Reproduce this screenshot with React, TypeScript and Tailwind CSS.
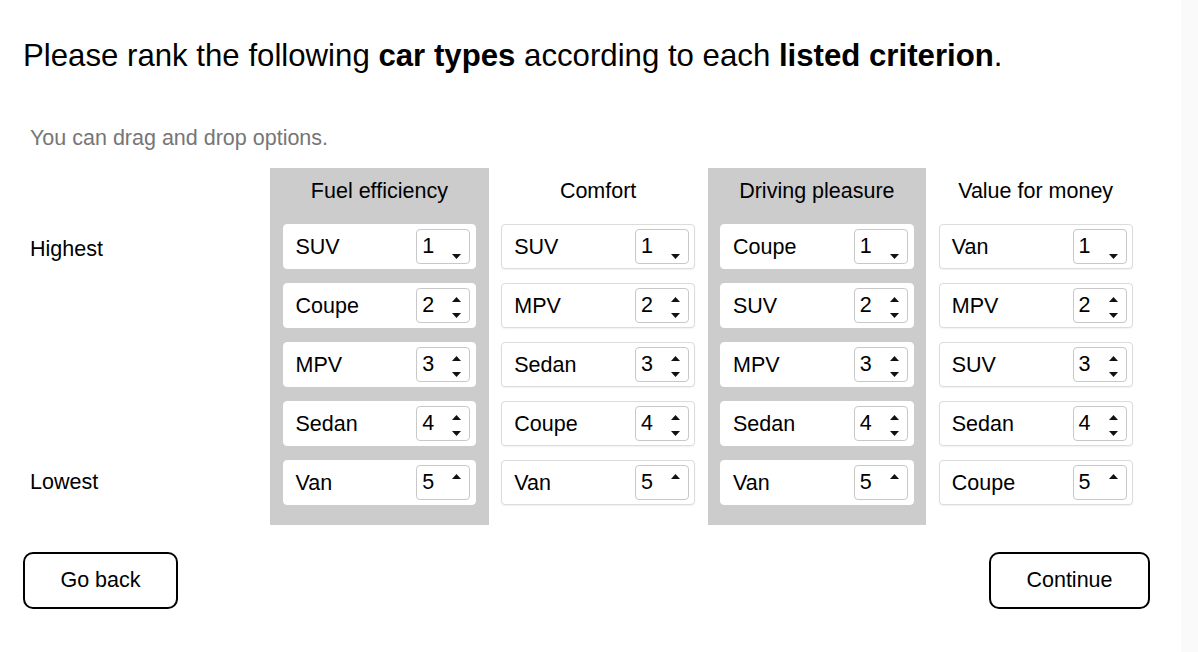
import React from "react";

type Column = {
  title: string;
  shaded: boolean;
  items: string[];
};

const columns: Column[] = [
  { title: "Fuel efficiency", shaded: true, items: ["SUV", "Coupe", "MPV", "Sedan", "Van"] },
  { title: "Comfort", shaded: false, items: ["SUV", "MPV", "Sedan", "Coupe", "Van"] },
  { title: "Driving pleasure", shaded: true, items: ["Coupe", "SUV", "MPV", "Sedan", "Van"] },
  { title: "Value for money", shaded: false, items: ["Van", "MPV", "SUV", "Sedan", "Coupe"] },
];

function RankBox({ value }: { value: number }) {
  // number input look: up arrow hidden at top rank, down arrow hidden at bottom rank
  return (
    <div className="relative h-[35px] w-[54px] rounded-[4px] border border-[#c8c8c8] bg-white pl-[5px] text-[21.5px] leading-[33px] text-black">
      {value}
      {value > 1 && (
        <svg className="absolute right-[8px] top-[8px]" width="9" height="5" viewBox="0 0 9 5">
          <path d="M0 5 L4.5 0 L9 5 Z" fill="#111" />
        </svg>
      )}
      {value < 5 && (
        <svg className="absolute right-[8px] top-[24px]" width="9" height="5" viewBox="0 0 9 5">
          <path d="M0 0 L9 0 L4.5 5 Z" fill="#111" />
        </svg>
      )}
    </div>
  );
}

function Card({ label, rank, shaded }: { label: string; rank: number; shaded: boolean }) {
  return (
    <div
      className={`flex h-[45px] items-center justify-between rounded-[4px] border bg-white pl-[12px] pr-[5px] ${
        shaded ? "border-white" : "border-[#dcdcdc] shadow-[0_1px_2px_rgba(0,0,0,0.06)]"
      }`}
    >
      <span className="text-[21.5px] leading-[24px] text-black">{label}</span>
      <RankBox value={rank} />
    </div>
  );
}

export default function App() {
  return (
    <div
      className="flex min-h-[652px] w-full bg-white"
      style={{ fontFamily: '"Liberation Sans", Arial, sans-serif' }}
    >
      <main className="flex-1 pl-[23px]">
        <h1 className="mt-[38px] text-[31.2px] leading-[36px] text-black">
          Please rank the following <b>car types</b> according to each <b>listed criterion</b>.
        </h1>

        <p className="ml-[7px] mt-[52px] text-[21.5px] leading-[24px] text-[#767676]">
          You can drag and drop options.
        </p>

        <div className="mt-[18px] flex">
          {/* ROW LABELS */}
          <div className="flex w-[247px] flex-col gap-[14px] pl-[7px] pt-[56px] text-[21.5px] text-black">
            <div className="flex h-[45px] items-center pt-[5px]">Highest</div>
            <div className="h-[45px]" />
            <div className="h-[45px]" />
            <div className="h-[45px]" />
            <div className="flex h-[45px] items-center">Lowest</div>
          </div>

          {/* CRITERIA */}
          {columns.map((col) => (
            <div
              key={col.title}
              className={`w-[218.75px] px-[12.5px] pb-[20px] ${col.shaded ? "bg-[#cccccc]" : "bg-white"}`}
            >
              <div className="h-[56px] pt-[11px] text-center text-[21.5px] leading-[24px] text-black">
                {col.title}
              </div>
              <div className="flex flex-col gap-[14px]">
                {col.items.map((item, i) => (
                  <Card key={item} label={item} rank={i + 1} shaded={col.shaded} />
                ))}
              </div>
            </div>
          ))}
        </div>

        <div className="mt-[27px] flex justify-between pr-[31px]">
          <button className="h-[57px] w-[155px] rounded-[10px] border-2 border-black bg-white text-[21.5px] text-black">
            Go back
          </button>
          <button className="h-[57px] w-[161px] rounded-[10px] border-2 border-black bg-white text-[21.5px] text-black">
            Continue
          </button>
        </div>
      </main>
      <div className="w-[17px] shrink-0 bg-[#fafafa]" />
    </div>
  );
}
